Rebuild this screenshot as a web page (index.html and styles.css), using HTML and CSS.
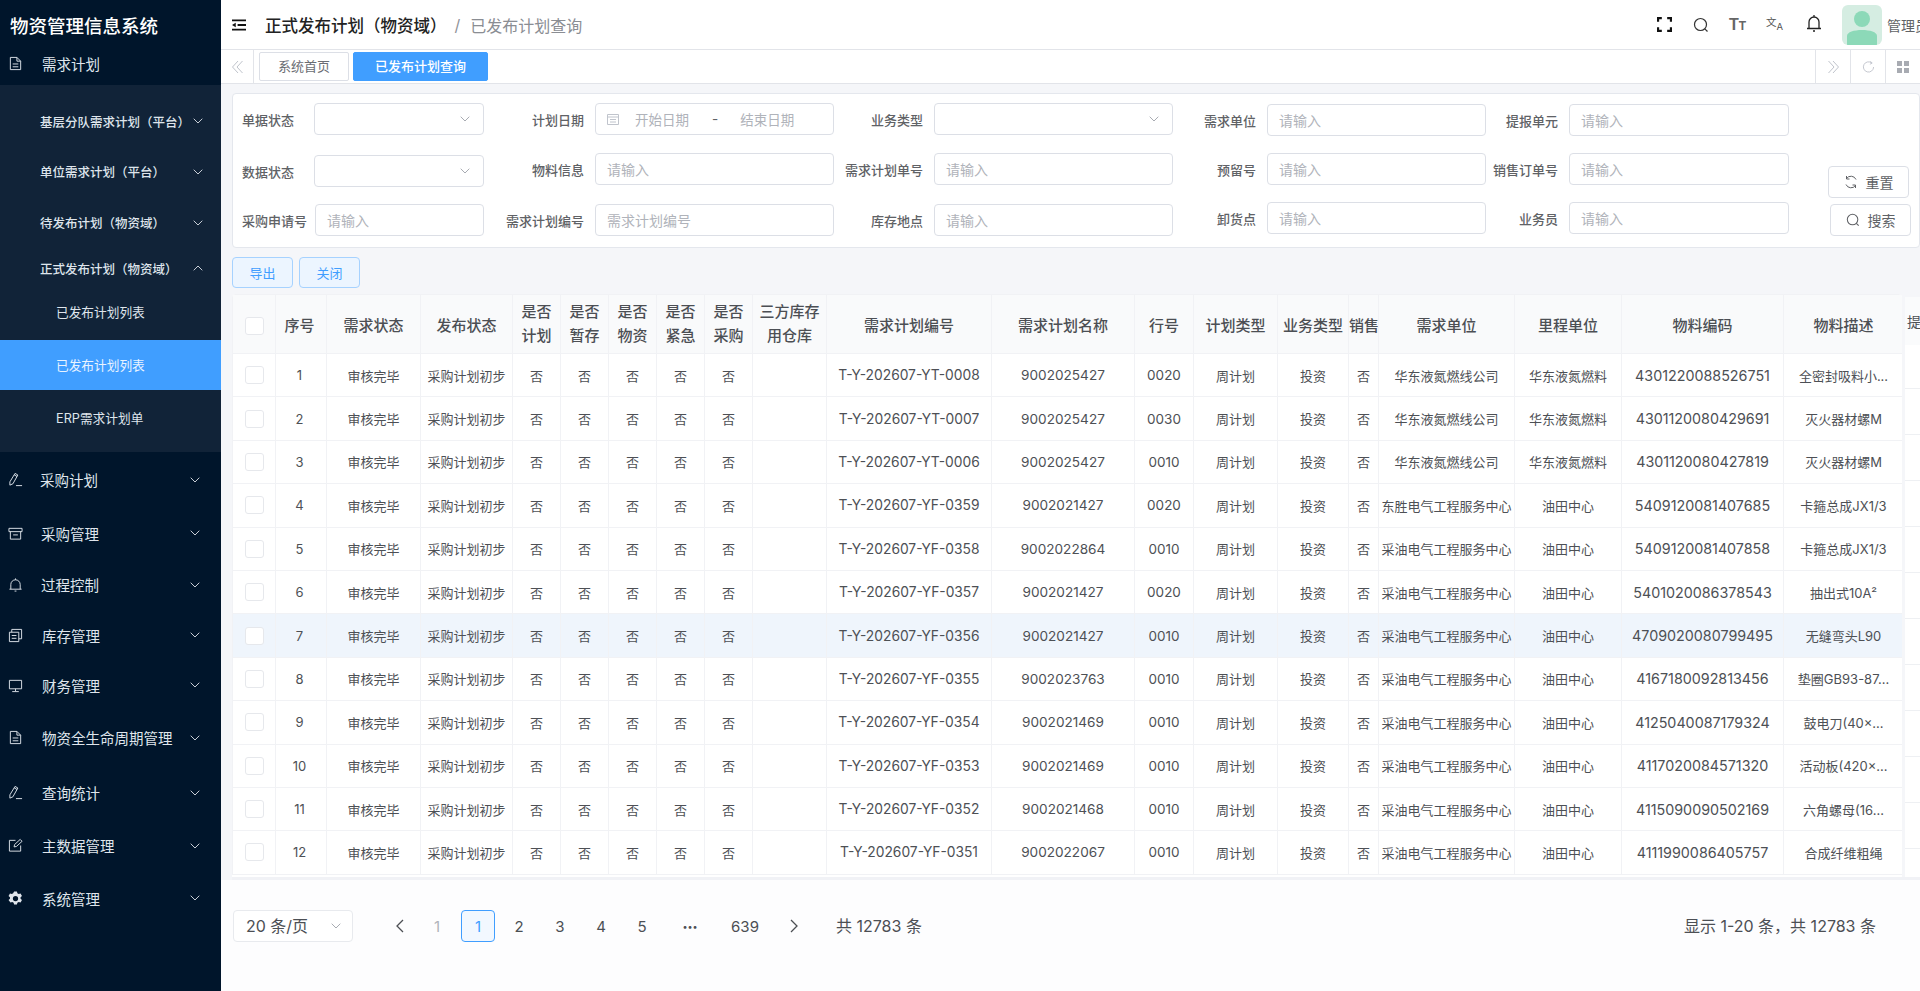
FILE: index.html
```html
<!DOCTYPE html>
<html lang="zh-CN">

<head>
    <meta charset="utf-8">
    <title>物资管理信息系统</title>
    <link rel="stylesheet" href="styles.css">
</head>

<body>
    <svg class="sprite" xmlns="http://www.w3.org/2000/svg">
        <symbol id="i-down" viewBox="0 0 10 6"><path d="M.7.7 5 5l4.3-4.3" fill="none" stroke="currentColor"/></symbol>
        <symbol id="i-up" viewBox="0 0 10 6"><path d="M.7 5.3 5 1l4.3 4.3" fill="none" stroke="currentColor"/></symbol>
        <symbol id="i-doc" viewBox="0 0 16 16"><path d="M2.5 1.5h7l4 4v9h-11zM9.500 1.500v4h4M5 8.500h6M5 11.500h6" fill="none" stroke="currentColor"/></symbol>
        <symbol id="i-pen" viewBox="0 0 16 16"><path d="M2 10.500 7.500 1.500l3 1.700L5.200 12.600l-3.200 1.400zM6.600 3l3 1.800M8.500 14.500h6.500" fill="none" stroke="currentColor"/></symbol>
        <symbol id="i-box" viewBox="0 0 16 16"><path d="M1 2.500h14v3.500H1zM2.500 6v8h11V6M5.500 9.500h5" fill="none" stroke="currentColor"/></symbol>
        <symbol id="i-bell" viewBox="0 0 16 16"><path d="M1.500 13h13M3 13V8a5 5 0 0 1 10 0v5M8 1.500V3M7 15h2" fill="none" stroke="currentColor"/></symbol>
        <symbol id="i-stack" viewBox="0 0 16 16"><path d="M1.500 4.500h10v10h-10zM4 4.500V1.500h10.500v10h-3M4 8h5M4 11h5" fill="none" stroke="currentColor"/></symbol>
        <symbol id="i-screen" viewBox="0 0 16 16"><path d="M1.500 2.500h13v9h-13zM8 11.500V14M4.500 14.500h7" fill="none" stroke="currentColor"/></symbol>
        <symbol id="i-edit" viewBox="0 0 16 16"><path d="M13.500 8v6h-12V2.500H8M6.500 9.500l.5-2.500L13 1.500l2 2-6 5.500z" fill="none" stroke="currentColor"/></symbol>
        <symbol id="i-gear" viewBox="0 0 16 16"><path fill="currentColor" fill-rule="evenodd" d="M6.500.5h3l.5 2 1.400.8 2-.6 1.500 2.600-1.500 1.400v1.600l1.500 1.400-1.500 2.600-2-.6-1.400.8-.5 2h-3l-.5-2-1.400-.8-2 .6L.6 9.700l1.500-1.400V6.700L.6 5.300l1.500-2.600 2 .6L5.500 2.500zM8 5.200a2.800 2.800 0 1 0 0 5.600 2.800 2.800 0 0 0 0-5.600z"/></symbol>
        <symbol id="i-search" viewBox="0 0 16 16"><circle cx="7.500" cy="7.500" r="6" fill="none" stroke="currentColor" stroke-width="1.200"/><path d="m11.800 11.800 2.700 2.700" stroke="currentColor" stroke-width="1.200"/></symbol>
        <symbol id="i-double-left" viewBox="0 0 12 14"><path d="M6.500 1 1 7l5.500 6M11 1 5.500 7l5.500 6" fill="none" stroke="currentColor"/></symbol>
        <symbol id="i-double-right" viewBox="0 0 12 14"><path d="m1 1 5.500 6L1 13M5.500 1 11 7l-5.500 6" fill="none" stroke="currentColor"/></symbol>
        <symbol id="i-left" viewBox="0 0 8 14"><path d="M7 1 1 7l6 6" fill="none" stroke="currentColor" stroke-width="1.300"/></symbol>
        <symbol id="i-right" viewBox="0 0 8 14"><path d="m1 1 6 6-6 6" fill="none" stroke="currentColor" stroke-width="1.300"/></symbol>
    </svg>

    <div class="app">
        <aside class="sidebar">
            <div class="logo">物资管理信息系统</div>
            <div class="nav-item nav-first">
                <svg class="nav-icon"><use href="#i-doc"/></svg><span>需求计划</span>
            </div>
            <div class="submenu">
                <div class="sub-item">基层分队需求计划（平台）<svg class="chev"><use href="#i-down"/></svg></div>
                <div class="sub-item">单位需求计划（平台）<svg class="chev"><use href="#i-down"/></svg></div>
                <div class="sub-item">待发布计划（物资域）<svg class="chev"><use href="#i-down"/></svg></div>
                <div class="sub-item sub-open">正式发布计划（物资域）<svg class="chev"><use href="#i-up"/></svg></div>
                <div class="leaf leaf-first">已发布计划列表</div>
                <div class="leaf leaf-active">已发布计划列表</div>
                <div class="leaf leaf-last">ERP需求计划单</div>
            </div>
            <div class="nav-list">
                <div class="nav-item"><svg class="nav-icon"><use href="#i-pen"/></svg><span>采购计划</span><svg class="chev"><use href="#i-down"/></svg></div>
                <div class="nav-item"><svg class="nav-icon"><use href="#i-box"/></svg><span>采购管理</span><svg class="chev"><use href="#i-down"/></svg></div>
                <div class="nav-item"><svg class="nav-icon"><use href="#i-bell"/></svg><span>过程控制</span><svg class="chev"><use href="#i-down"/></svg></div>
                <div class="nav-item"><svg class="nav-icon"><use href="#i-stack"/></svg><span>库存管理</span><svg class="chev"><use href="#i-down"/></svg></div>
                <div class="nav-item"><svg class="nav-icon"><use href="#i-screen"/></svg><span>财务管理</span><svg class="chev"><use href="#i-down"/></svg></div>
                <div class="nav-item"><svg class="nav-icon"><use href="#i-doc"/></svg><span>物资全生命周期管理</span><svg class="chev"><use href="#i-down"/></svg></div>
                <div class="nav-item"><svg class="nav-icon"><use href="#i-pen"/></svg><span>查询统计</span><svg class="chev"><use href="#i-down"/></svg></div>
                <div class="nav-item"><svg class="nav-icon"><use href="#i-edit"/></svg><span>主数据管理</span><svg class="chev"><use href="#i-down"/></svg></div>
                <div class="nav-item"><svg class="nav-icon"><use href="#i-gear"/></svg><span>系统管理</span><svg class="chev"><use href="#i-down"/></svg></div>
            </div>
        </aside>

        <div class="main">
            <header class="topbar">
                <svg class="menu-toggle" viewBox="0 0 15 12"><path d="M0 1h15M6 6h9M0 11h15" stroke="currentColor" stroke-width="2"/><path d="M4 3.500 0 6l4 2.500z" fill="currentColor"/></svg>
                <span class="crumb-main">正式发布计划（物资域）</span>
                <span class="crumb-sep">/</span>
                <span class="crumb-sub">已发布计划查询</span>
                <div class="top-tools">
                    <svg class="tool-full" viewBox="0 0 14 14"><path d="M1 4.500V1h3.500M9.500 1H13v3.500M13 9.500V13H9.500M4.500 13H1V9.500" fill="none" stroke="currentColor" stroke-width="2"/></svg>
                    <svg class="tool-search"><use href="#i-search"/></svg>
                    <span class="tool-font">T<small>T</small></span>
                    <span class="tool-lang">文<small>A</small></span>
                    <svg class="tool-bell" viewBox="0 0 16 18"><path d="M1 14.500h14M3 14.500V8a5 5 0 0 1 10 0v6.500M8 1v2M7 17h2" fill="none" stroke="currentColor" stroke-width="1.300"/></svg>
                    <svg class="avatar" viewBox="0 0 40 40"><circle cx="20" cy="14" r="8" fill="#8cd9b8"/><path d="M5 40V31c0-4 7-6 15-6s15 2 15 6v9z" fill="#8cd9b8"/></svg>
                    <span class="user-name">管理员</span>
                </div>
            </header>

            <nav class="tabbar">
                <div class="tab-arrow"><svg><use href="#i-double-left"/></svg></div>
                <span class="tab">系统首页</span>
                <span class="tab tab-active">已发布计划查询</span>
                <div class="tab-tools">
                    <div class="tab-tool"><svg><use href="#i-double-right"/></svg></div>
                    <div class="tab-tool"><svg viewBox="0 0 14 14"><path d="M12.500 7A5.500 5.500 0 1 1 10.500 2.700M9 .8l2 2-2.500 1.200" fill="none" stroke="currentColor"/></svg></div>
                    <div class="tab-tool tab-grid"><svg viewBox="0 0 12 12"><path d="M0 0h5v5H0zM7 0h5v5H7zM0 7h5v5H0zM7 7h5v5H7z" fill="currentColor"/></svg></div>
                </div>
            </nav>

            <section class="content">
                <form class="filter-card">
                    <div class="field f1"><label>单据状态</label><div class="control select"><svg class="chev"><use href="#i-down"/></svg></div></div>
                    <div class="field f2"><label>计划日期</label>
                        <div class="control date">
                            <svg class="cal" viewBox="0 0 12 12"><path d="M.5 1.500h11v10H.5zM.5 4h11M3 6.500h6M3 9h6" fill="none" stroke="currentColor"/></svg>
                            <span class="date-from">开始日期</span><span class="date-dash">-</span><span>结束日期</span>
                        </div>
                    </div>
                    <div class="field f3"><label>业务类型</label><div class="control select"><svg class="chev"><use href="#i-down"/></svg></div></div>
                    <div class="field f4 down-1"><label>需求单位</label><div class="control">请输入</div></div>
                    <div class="field f5 down-1"><label>提报单元</label><div class="control">请输入</div></div>

                    <div class="field f1 down-2"><label>数据状态</label><div class="control select"><svg class="chev"><use href="#i-down"/></svg></div></div>
                    <div class="field f2"><label>物料信息</label><div class="control">请输入</div></div>
                    <div class="field f3"><label>需求计划单号</label><div class="control">请输入</div></div>
                    <div class="field f4"><label>预留号</label><div class="control">请输入</div></div>
                    <div class="field f5"><label>销售订单号</label><div class="control">请输入</div></div>

                    <div class="field f1"><label>采购申请号</label><div class="control">请输入</div></div>
                    <div class="field f2"><label>需求计划编号</label><div class="control">需求计划编号</div></div>
                    <div class="field f3"><label>库存地点</label><div class="control">请输入</div></div>
                    <div class="field f4 up-2"><label>卸货点</label><div class="control">请输入</div></div>
                    <div class="field f5 up-2"><label>业务员</label><div class="control">请输入</div></div>

                    <div class="filter-actions">
                        <button type="button" class="btn"><svg viewBox="0 0 14 14"><path d="M12 4.500A5.500 5.500 0 0 0 2.500 3.500M2 9.500a5.500 5.500 0 0 0 9.500 1M2.500 1v3h3M11.500 13v-3h-3" fill="none" stroke="currentColor"/></svg>重置</button>
                        <button type="button" class="btn btn-search"><svg><use href="#i-search"/></svg>搜索</button>
                    </div>
                </form>

                <div class="actions">
                    <button type="button" class="btn-light">导出</button>
                    <button type="button" class="btn-light">关闭</button>
                </div>

                <div class="table-area">
                    <div class="table-wrap">
                        <table class="grid">
                            <colgroup>
                                <col class="c43"><col class="c51"><col class="c94"><col class="c92"><col class="c48"><col class="c48"><col class="c48"><col class="c48"><col class="c48"><col class="c74"><col class="c165"><col class="c143"><col class="c59"><col class="c84"><col class="c71"><col class="c30"><col class="c136"><col class="c107"><col class="c162"><col class="c120">
                            </colgroup>
                            <thead>
                                <tr>
                                    <th><span class="check"></span></th><th>序号</th><th>需求状态</th><th>发布状态</th><th>是否<br>计划</th><th>是否<br>暂存</th><th>是否<br>物资</th><th>是否<br>紧急</th><th>是否<br>采购</th><th>三方库存<br>用仓库</th><th>需求计划编号</th><th>需求计划名称</th><th>行号</th><th>计划类型</th><th>业务类型</th><th>销售</th><th>需求单位</th><th>里程单位</th><th>物料编码</th><th>物料描述</th>
                                </tr>
                            </thead>
                            <tbody>
                                <tr><td><span class="check"></span></td><td>1</td><td>审核完毕</td><td>采购计划初步</td><td>否</td><td>否</td><td>否</td><td>否</td><td>否</td><td></td><td>T-Y-202607-YT-0008</td><td>9002025427</td><td>0020</td><td>周计划</td><td>投资</td><td>否</td><td>华东液氮燃线公司</td><td>华东液氮燃料</td><td>4301220088526751</td><td>全密封吸料小...</td></tr>
                                <tr><td><span class="check"></span></td><td>2</td><td>审核完毕</td><td>采购计划初步</td><td>否</td><td>否</td><td>否</td><td>否</td><td>否</td><td></td><td>T-Y-202607-YT-0007</td><td>9002025427</td><td>0030</td><td>周计划</td><td>投资</td><td>否</td><td>华东液氮燃线公司</td><td>华东液氮燃料</td><td>4301120080429691</td><td>灭火器材螺M</td></tr>
                                <tr><td><span class="check"></span></td><td>3</td><td>审核完毕</td><td>采购计划初步</td><td>否</td><td>否</td><td>否</td><td>否</td><td>否</td><td></td><td>T-Y-202607-YT-0006</td><td>9002025427</td><td>0010</td><td>周计划</td><td>投资</td><td>否</td><td>华东液氮燃线公司</td><td>华东液氮燃料</td><td>4301120080427819</td><td>灭火器材螺M</td></tr>
                                <tr><td><span class="check"></span></td><td>4</td><td>审核完毕</td><td>采购计划初步</td><td>否</td><td>否</td><td>否</td><td>否</td><td>否</td><td></td><td>T-Y-202607-YF-0359</td><td>9002021427</td><td>0020</td><td>周计划</td><td>投资</td><td>否</td><td>东胜电气工程服务中心</td><td>油田中心</td><td>5409120081407685</td><td>卡箍总成JX1/3</td></tr>
                                <tr><td><span class="check"></span></td><td>5</td><td>审核完毕</td><td>采购计划初步</td><td>否</td><td>否</td><td>否</td><td>否</td><td>否</td><td></td><td>T-Y-202607-YF-0358</td><td>9002022864</td><td>0010</td><td>周计划</td><td>投资</td><td>否</td><td>采油电气工程服务中心</td><td>油田中心</td><td>5409120081407858</td><td>卡箍总成JX1/3</td></tr>
                                <tr><td><span class="check"></span></td><td>6</td><td>审核完毕</td><td>采购计划初步</td><td>否</td><td>否</td><td>否</td><td>否</td><td>否</td><td></td><td>T-Y-202607-YF-0357</td><td>9002021427</td><td>0020</td><td>周计划</td><td>投资</td><td>否</td><td>采油电气工程服务中心</td><td>油田中心</td><td>5401020086378543</td><td>抽出式10A²</td></tr>
                                <tr class="row-hover"><td><span class="check"></span></td><td>7</td><td>审核完毕</td><td>采购计划初步</td><td>否</td><td>否</td><td>否</td><td>否</td><td>否</td><td></td><td>T-Y-202607-YF-0356</td><td>9002021427</td><td>0010</td><td>周计划</td><td>投资</td><td>否</td><td>采油电气工程服务中心</td><td>油田中心</td><td>4709020080799495</td><td>无缝弯头L90</td></tr>
                                <tr><td><span class="check"></span></td><td>8</td><td>审核完毕</td><td>采购计划初步</td><td>否</td><td>否</td><td>否</td><td>否</td><td>否</td><td></td><td>T-Y-202607-YF-0355</td><td>9002023763</td><td>0010</td><td>周计划</td><td>投资</td><td>否</td><td>采油电气工程服务中心</td><td>油田中心</td><td>4167180092813456</td><td>垫圈GB93-87...</td></tr>
                                <tr><td><span class="check"></span></td><td>9</td><td>审核完毕</td><td>采购计划初步</td><td>否</td><td>否</td><td>否</td><td>否</td><td>否</td><td></td><td>T-Y-202607-YF-0354</td><td>9002021469</td><td>0010</td><td>周计划</td><td>投资</td><td>否</td><td>采油电气工程服务中心</td><td>油田中心</td><td>4125040087179324</td><td>鼓电刀(40×...</td></tr>
                                <tr><td><span class="check"></span></td><td>10</td><td>审核完毕</td><td>采购计划初步</td><td>否</td><td>否</td><td>否</td><td>否</td><td>否</td><td></td><td>T-Y-202607-YF-0353</td><td>9002021469</td><td>0010</td><td>周计划</td><td>投资</td><td>否</td><td>采油电气工程服务中心</td><td>油田中心</td><td>4117020084571320</td><td>活动板(420×...</td></tr>
                                <tr><td><span class="check"></span></td><td>11</td><td>审核完毕</td><td>采购计划初步</td><td>否</td><td>否</td><td>否</td><td>否</td><td>否</td><td></td><td>T-Y-202607-YF-0352</td><td>9002021468</td><td>0010</td><td>周计划</td><td>投资</td><td>否</td><td>采油电气工程服务中心</td><td>油田中心</td><td>4115090090502169</td><td>六角螺母(16...</td></tr>
                                <tr><td><span class="check"></span></td><td>12</td><td>审核完毕</td><td>采购计划初步</td><td>否</td><td>否</td><td>否</td><td>否</td><td>否</td><td></td><td>T-Y-202607-YF-0351</td><td>9002022067</td><td>0010</td><td>周计划</td><td>投资</td><td>否</td><td>采油电气工程服务中心</td><td>油田中心</td><td>4111990086405757</td><td>合成纤维粗绳</td></tr>
                            </tbody>
                        </table>
                    </div>
                    <div class="table-next"><div class="next-head">提</div></div>
                </div>
            </section>

            <footer class="pager-bar">
                <div class="page-size"><span class="size-text">20 条/页</span><svg class="chev"><use href="#i-down"/></svg></div>
                <div class="pager">
                    <span class="page"><svg class="page-arrow"><use href="#i-left"/></svg></span>
                    <span class="page page-off">1</span>
                    <span class="page page-on">1</span>
                    <span class="page">2</span>
                    <span class="page">3</span>
                    <span class="page">4</span>
                    <span class="page">5</span>
                    <span class="page page-dots">•••</span>
                    <span class="page page-last">639</span>
                    <span class="page page-next"><svg class="page-arrow"><use href="#i-right"/></svg></span>
                </div>
                <span class="page-total">共 12783 条</span>
                <span class="page-info">显示 1-20 条，共 12783 条</span>
            </footer>
        </div>
    </div>
</body>

</html>
```

FILE: styles.css
```css
* {
    box-sizing: border-box;
}

body {
    margin: 0;
    height: 991px;
    overflow: hidden;
    background-color: #fdfdfe;
    font-family: Inter, "Noto Sans CJK SC", sans-serif;
    font-size: 13px;
    color: #555;
}

.sprite {
    display: none;
}

.app {
    display: flex;
    height: 991px;
}

/* sidebar */
.sidebar {
    width: 221px;
    flex: none;
    background-color: #00152b;
    color: #dfe5ec;
}

.logo {
    height: 42px;
    padding: 8px 0 0 10px;
    font-size: 18.5px;
    font-weight: 500;
    line-height: 36px;
    color: #fff;
}

.nav-item {
    display: flex;
    align-items: center;
    height: 51px;
    padding-left: 8px;
    padding-right: 21px;
    font-size: 14.5px;
}

.nav-first {
    height: 43px;
}

.nav-icon {
    width: 15px;
    height: 15px;
    flex: none;
    margin-right: 19px;
}

.chev {
    width: 10px;
    height: 6px;
    flex: none;
    margin-left: auto;
    color: #c8ced6;
}

.nav-list .nav-item:nth-child(1) { height: 55px; }
.nav-list .nav-item:nth-child(2) { height: 52px; }
.nav-list .nav-item:nth-child(4) { height: 50px; }
.nav-list .nav-item:nth-child(5) { height: 50px; }
.nav-list .nav-item:nth-child(6) { height: 55px; }
.nav-list .nav-item:nth-child(7) { height: 55px; }
.nav-list .nav-item:nth-child(9) { height: 54px; }

.nav-list .nav-item:nth-child(1) span { margin-left: -2px; }
.nav-list .nav-item:nth-child(2) span,
.nav-list .nav-item:nth-child(3) span { margin-left: -1px; }

.submenu {
    height: 367px;
    padding-top: 11px;
    background-color: #112338;
}

.sub-item {
    display: flex;
    align-items: center;
    height: 51px;
    padding-left: 40px;
    padding-right: 18px;
    font-size: 12.5px;
    font-weight: 500;
}

.sub-item:first-child {
    height: 50px;
}

.sub-open {
    height: 40px;
}

.leaf {
    height: 50px;
    padding-left: 56px;
    font-size: 12.700px;
    line-height: 52px;
}

.leaf-first {
    height: 52px;
    line-height: 50px;
}

.leaf-active {
    background-color: #409eff;
    color: #e9f3ff;
}

.leaf-last {
    line-height: 58px;
}

/* header */
.main {
    flex: 1;
    min-width: 0;
    display: flex;
    flex-direction: column;
}

.topbar {
    display: flex;
    align-items: center;
    height: 50px;
    flex: none;
    padding-left: 11px;
    background-color: #fff;
    border-bottom: 1px solid #e2e4e9;
}

.menu-toggle {
    width: 14px;
    height: 12px;
    flex: none;
    margin-right: 19px;
    color: #111;
}

.crumb-main {
    font-size: 16.500px;
    font-weight: 500;
    color: #222;
}

.crumb-sep {
    margin: 0 10px 0 8px;
    font-size: 16px;
    color: #909399;
}

.crumb-sub {
    font-size: 16px;
    color: #8a8d93;
}

.top-tools {
    display: flex;
    align-items: center;
    margin-left: auto;
    width: 263px;
    flex: none;
    overflow: hidden;
    color: #333;
}

.tool-full {
    width: 15px;
    height: 15px;
    flex: none;
    margin-right: 21px;
    color: #111;
}

.tool-search {
    width: 16px;
    height: 16px;
    flex: none;
    margin-right: 20px;
}

.tool-font {
    width: 16px;
    flex: none;
    margin-right: 21px;
    font-family: "Liberation Sans", sans-serif;
    font-size: 16px;
    font-weight: bold;
    color: #666;
}

.tool-font small {
    font-size: 12px;
}

.tool-lang {
    width: 20px;
    flex: none;
    margin-right: 20px;
    font-size: 10.500px;
    line-height: 16px;
    white-space: nowrap;
    color: #555;
}

.tool-lang small {
    vertical-align: -4px;
    font-size: 9.500px;
}

.tool-bell {
    width: 16px;
    height: 18px;
    flex: none;
    margin-right: 20px;
    margin-bottom: 4px;
    color: #222;
}

.avatar {
    width: 40px;
    height: 40px;
    flex: none;
    margin-right: 5px;
    border-radius: 6px;
    background-color: #d5ede2;
}

.user-name {
    flex: none;
    font-size: 14px;
    color: #606266;
}

/* tabs */
.tabbar {
    display: flex;
    align-items: center;
    height: 34px;
    flex: none;
    background-color: #fff;
    border-bottom: 1px solid #e2e4e9;
}

.tab-arrow {
    display: flex;
    align-items: center;
    justify-content: center;
    width: 33px;
    height: 33px;
    margin-right: 5px;
    border-right: 1px solid #e2e4e9;
    color: #c0c4cc;
}

.tab-arrow svg,
.tab-tool svg {
    width: 13px;
    height: 14px;
}

.tab {
    width: 90px;
    height: 29px;
    margin-right: 4px;
    border: 1px solid #dcdfe6;
    border-radius: 2px;
    text-align: center;
    line-height: 27px;
    color: #6a6d73;
}

.tab-active {
    width: 135px;
    border-color: #409eff;
    background-color: #409eff;
    font-weight: 500;
    color: #fff;
}

.tab-tools {
    display: flex;
    margin-left: auto;
}

.tab-tool {
    display: flex;
    align-items: center;
    justify-content: center;
    width: 35px;
    height: 33px;
    border-left: 1px solid #e2e4e9;
    color: #c0c4cc;
}

.tab-grid {
    color: #a8abb2;
}

.tab-grid svg {
    width: 12px;
    height: 12px;
}

/* filter */
.content {
    height: 796px;
    flex: none;
    padding: 9px 0 0 11px;
    background-color: #f5f6f9;
}

.filter-card {
    display: grid;
    grid-template-columns: 242px 350px 339px 313px 303px 1fr;
    grid-template-rows: 50px 51px 33px;
    height: 155px;
    padding: 9px 0 0 9px;
    background-color: #fff;
    border: 1px solid #e4e7ed;
    border-radius: 4px;
}

.field {
    display: flex;
    align-items: center;
    height: 32px;
}

.field label {
    flex: 1;
    min-width: 0;
    padding-right: 11px;
    text-align: right;
    white-space: nowrap;
    font-weight: 500;
    color: #606266;
}

.f1 label {
    text-align: left;
    padding-right: 0;
}

.down-1 { margin-top: 1px; }
.down-2 { margin-top: 2px; }
.up-2 { margin-top: -2px; }

.control {
    display: flex;
    align-items: center;
    flex: none;
    height: 32px;
    padding: 0 11px;
    background-color: #fff;
    border: 1px solid #dcdfe6;
    border-radius: 4px;
    font-size: 14px;
    color: #b0b3ba;
}

.f1 .control { width: 169px; }
.f1 .select { width: 170px; }
.f2 .control { width: 239px; }
.f3 .control { width: 239px; }
.f4 .control { width: 219px; }
.f5 .control { width: 220px; }

.select {
    padding-right: 13px;
}

.select .chev {
    color: #a8abb2;
}

.cal {
    width: 12px;
    height: 12px;
    flex: none;
    margin-right: 16px;
    color: #c0c4cc;
}

.date {
    font-size: 13.500px;
}

.date-from {
    margin-right: 23px;
}

.date-dash {
    margin-right: 22px;
    color: #606266;
}

.filter-actions {
    grid-column: 6;
    grid-row: 1 / span 3;
    display: flex;
    flex-direction: column;
    gap: 6px;
    padding: 63px 0 0 39px;
}

.btn {
    display: flex;
    align-items: center;
    justify-content: center;
    gap: 8px;
    width: 81px;
    height: 32px;
    padding: 0;
    background-color: #fff;
    border: 1px solid #dcdfe6;
    border-radius: 4px;
    font: inherit;
    font-size: 14px;
    color: #606266;
}

.btn svg {
    width: 14px;
    height: 14px;
    flex: none;
}

.btn-search {
    margin-left: 2px;
}

.actions {
    display: flex;
    gap: 6px;
    margin: 9px 0 6px;
}

.btn-light {
    width: 61px;
    height: 31px;
    padding: 0;
    background-color: #ecf5ff;
    border: 1px solid #a6d2ff;
    border-radius: 4px;
    font: inherit;
    font-size: 13px;
    color: #409eff;
}

/* table */
.table-area {
    display: flex;
    height: 586px;
    border-bottom: 3px solid #f1f2f6;
}

.table-wrap {
    width: 1670px;
    flex: none;
    overflow: hidden;
    background-color: #fff;
    border-radius: 4px 4px 0 0;
}

.grid {
    width: 1670px;
    table-layout: fixed;
    border-collapse: collapse;
}

.c43 { width: 43px; }
.c51 { width: 51px; }
.c94 { width: 94px; }
.c92 { width: 92px; }
.c48 { width: 48px; }
.c74 { width: 74px; }
.c165 { width: 165px; }
.c143 { width: 143px; }
.c59 { width: 59px; }
.c84 { width: 84px; }
.c71 { width: 71px; }
.c30 { width: 30px; }
.c136 { width: 136px; }
.c107 { width: 107px; }
.c162 { width: 162px; }
.c120 { width: 120px; }

.grid th,
.grid td {
    padding: 0;
    border: 1px solid #f1f2f5;
    text-align: center;
    white-space: nowrap;
    overflow: hidden;
}

.grid th {
    height: 59px;
    padding-top: 4px;
    background-color: #f9fafb;
    font-size: 15px;
    font-weight: 500;
    line-height: 24px;
    color: #4c4f54;
}

.grid th:nth-child(n+5):nth-child(-n+10) {
    padding-top: 0;
}

.grid th:nth-child(2),
.grid td:nth-child(2) {
    padding-right: 3px;
}

.grid td {
    height: 43.400px;
    font-size: 13px;
    color: #4d5055;
}

.grid td:nth-child(11) { font-size: 13.800px; }
.grid td:nth-child(12) { font-size: 13.600px; }
.grid td:nth-child(13) { font-size: 13.500px; }
.grid td:nth-child(19) { font-size: 14.300px; }

.row-hover td {
    background-color: #eff5fc;
}

.check {
    display: block;
    width: 19px;
    height: 18px;
    margin: 0 auto;
    background-color: #fff;
    border: 1px solid #e6e8ec;
    border-radius: 3px;
}

.table-next {
    flex: 1;
    min-width: 0;
    margin: 3px 0 0 3px;
    overflow: hidden;
    background-color: #fff;
    background-image: repeating-linear-gradient(#fff 0, #fff 45px, #eef0f3 45px, #eef0f3 46px);
}

.next-head {
    height: 48px;
    padding-left: 2px;
    background-color: #fafbfc;
    white-space: nowrap;
    font-size: 14px;
    line-height: 50px;
    color: #4c4f54;
}

/* pagination */
.pager-bar {
    display: flex;
    align-items: flex-start;
    flex: 1;
    padding: 30px 44px 0 12px;
    font-size: 16px;
    color: #4c4f54;
}

.page-size {
    display: flex;
    align-items: center;
    width: 120px;
    height: 32px;
    padding: 0 11px 0 12px;
    background-color: #fff;
    border: 1px solid #e8eaee;
    border-radius: 4px;
    font-size: 16px;
}

.size-text {
    margin-bottom: 3px;
}

.page-size .chev {
    color: #a8abb2;
}

.pager {
    display: flex;
    gap: 7px;
    margin-left: 30px;
}

.page {
    display: flex;
    align-items: center;
    justify-content: center;
    width: 34px;
    height: 32px;
    font-size: 15px;
}

.page-arrow {
    width: 8px;
    height: 14px;
}

.page-off {
    margin-left: -4px;
    color: #b0b3ba;
}

.page-on {
    border: 1px solid #409eff;
    border-radius: 4px;
    background-color: #f2f8ff;
    color: #409eff;
}

.page-dots {
    margin-left: 7px;
    font-size: 9px;
}

.page-last {
    margin-left: 14px;
}

.page-next {
    margin-left: 8px;
}

.page-total {
    margin-left: 25px;
    line-height: 32px;
}

.page-info {
    margin-left: auto;
    line-height: 32px;
}
```
